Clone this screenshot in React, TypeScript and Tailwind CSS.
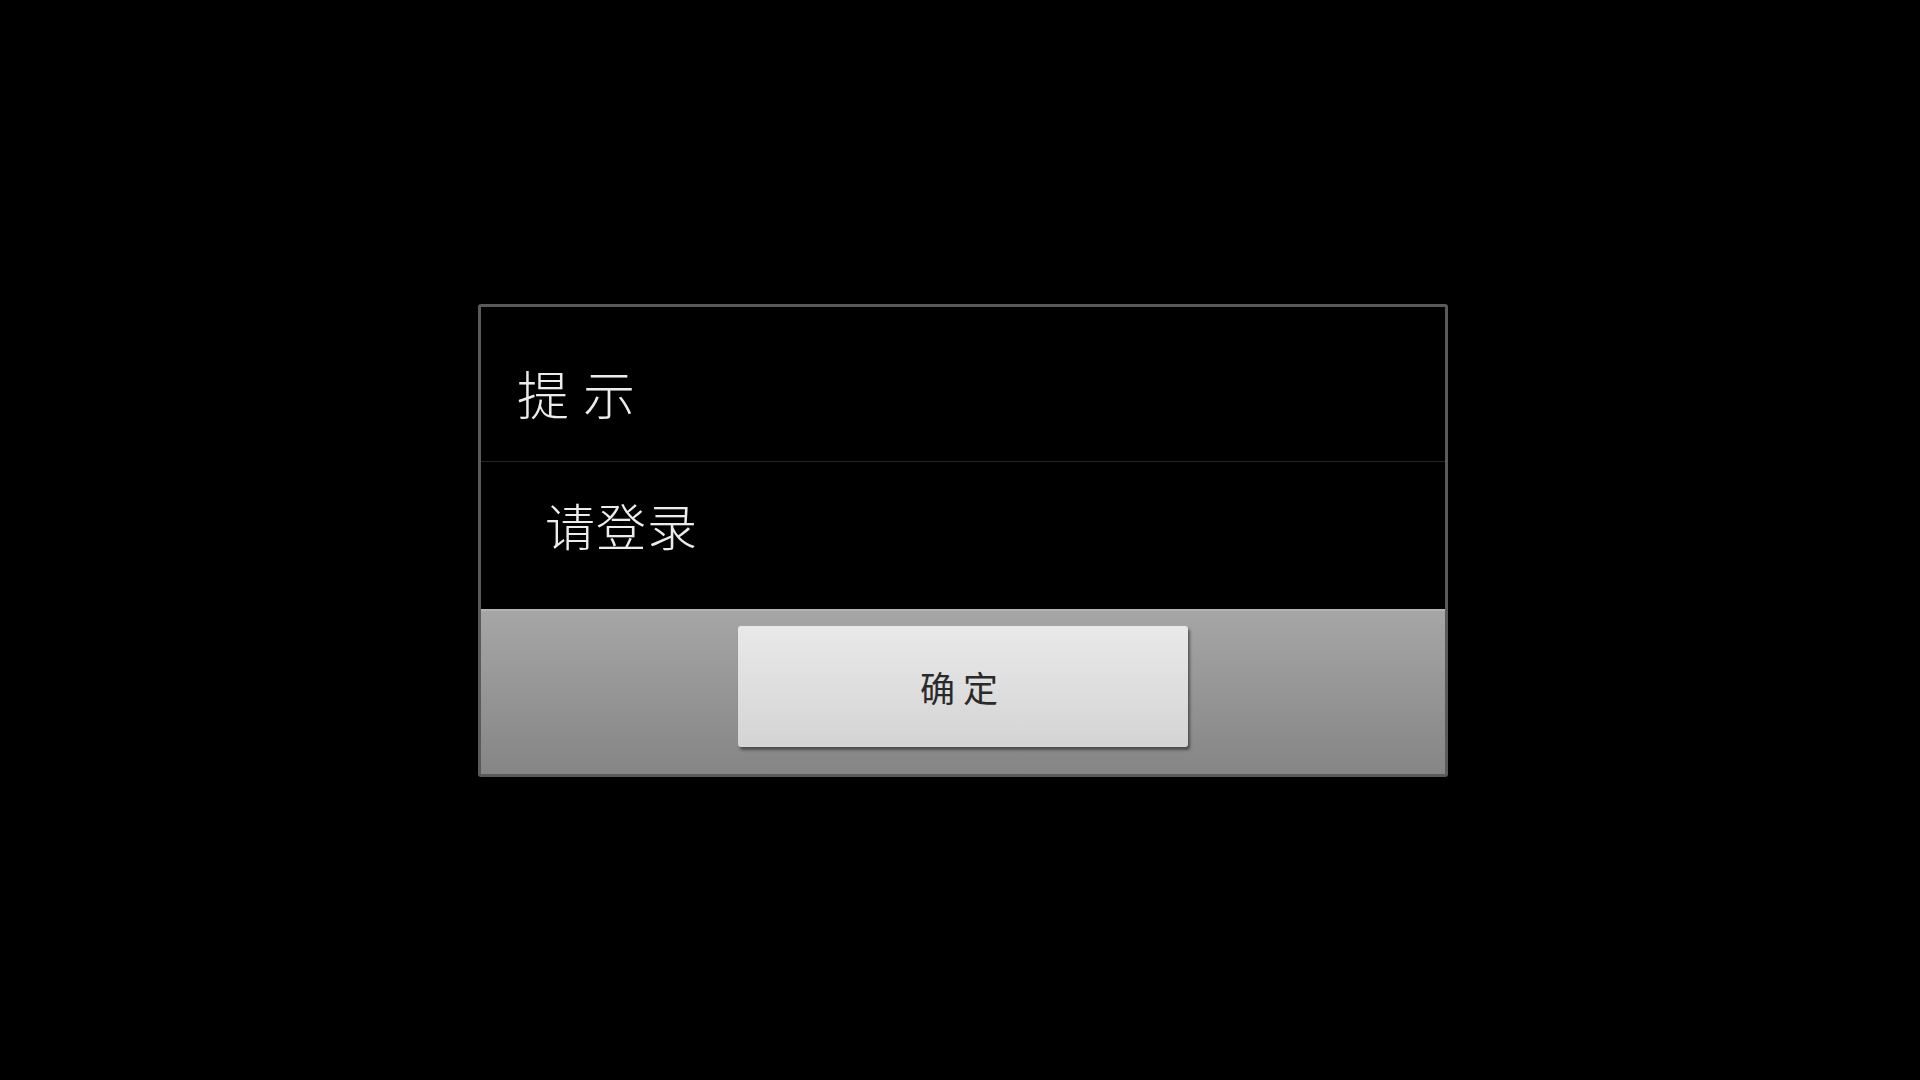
export default function App() {
  const cjk = "font-['Noto_Sans_CJK_SC',sans-serif]"

  return (
    <div className={`min-h-screen w-full bg-black flex items-center justify-center ${cjk}`}>
      {/* alert dialog */}
      <div className="w-[970px] h-[473px] flex flex-col rounded-[3px] border-[3px] border-[#5a5a5a] bg-black translate-x-[3px]">
        <div className="h-[155px] flex items-center pl-[36px] pt-[18px] border-b border-[#262626]">
          <span className="text-[52px] leading-none tracking-[14px] text-[#ececec] font-light">提示</span>
        </div>
        <div className="h-[147px] flex items-center pl-[64px] pb-[22px]">
          <span className="text-[50px] leading-none tracking-[1px] text-[#ececec] font-light">请登录</span>
        </div>
        <div className="flex-1 flex justify-center pt-[15px] border-t-2 border-[#b4b4b4] bg-gradient-to-b from-[#a6a6a6] to-[#858585]">
          <button className="w-[450px] h-[121px] rounded-[3px] bg-gradient-to-b from-[#e9e9e9] to-[#d4d4d4] shadow-[2px_3px_3px_rgba(0,0,0,0.45)] flex items-center justify-center">
            <span className="text-[35px] leading-none tracking-[8px] text-[#2a2a2a] pt-[1px]">确定</span>
          </button>
        </div>
      </div>
    </div>
  )
}
